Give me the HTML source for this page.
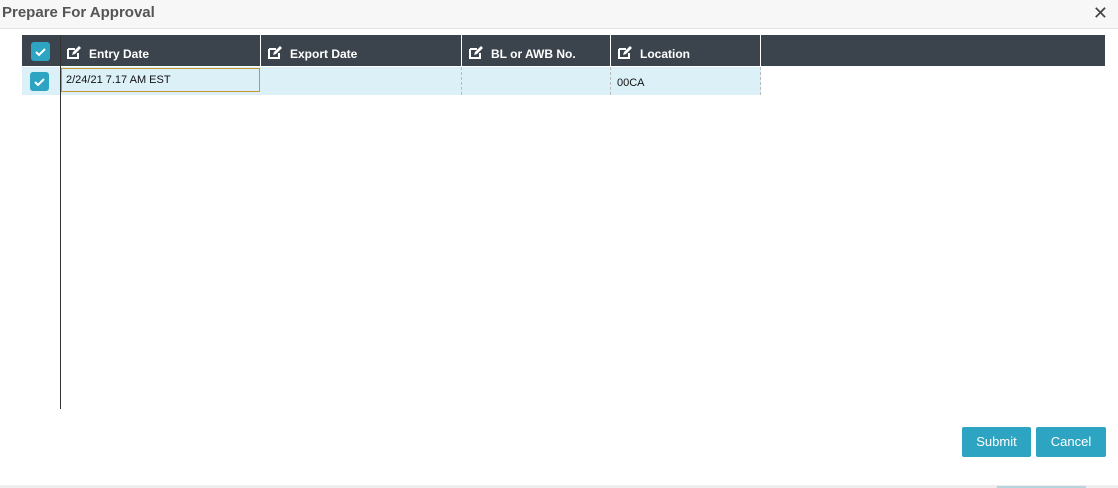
<!DOCTYPE html>
<html><head><style>
body{margin:0;width:1118px;height:488px;background:#fff;font-family:"Liberation Sans",sans-serif;position:relative;overflow:hidden}
.hdr{position:absolute;left:0;top:0;width:1118px;height:28px;background:#f7f7f7;border-bottom:1px solid #e3e3e3}
.title{position:absolute;left:2px;top:4px;font-size:15px;font-weight:bold;color:#555}
.x{position:absolute;right:10px;top:3px;font-size:18px;color:#444}
.th{position:absolute;top:35px;height:31px;background:#3b434c}
.cell{position:absolute;top:35px;height:31px;color:#fff;font-size:12px;font-weight:bold;line-height:38px;border-right:1px solid #fff;box-sizing:border-box}
.ic{display:inline-block;vertical-align:middle;margin:0 8px 0 7px;position:relative;top:-2px}
.cb{position:absolute;width:19px;height:19px;background:#2ea4c3;border-radius:3px}
.row{position:absolute;left:22px;top:67px;width:739px;height:28px;background:#dcf0f8}
.dash{position:absolute;top:67px;height:28px;border-left:1px dashed #bbb}
.btn{position:absolute;top:427px;height:30px;background:#2ea4c3;color:#fff;font-size:13px;text-align:center;line-height:30px;border-radius:2px}
</style></head><body>
<div class="hdr"><div class="title">Prepare For Approval</div><div class="x">✕</div></div>
<div class="th" style="left:22px;width:1083px"></div>
<div class="cb" style="left:31px;top:42px"><svg width="19" height="19"><path d="M5 10l3 3 6-6" stroke="#fff" stroke-width="2" fill="none"/></svg></div>
<div class="cell" style="left:60px;width:201px"><svg class="ic" width="14" height="13"><path d="M1 3h7M1 3v9h10V7" stroke="#fff" stroke-width="2" fill="none"/><path d="M5 9l1-3 6-6 2 2-6 6z" fill="#fff"/></svg>Entry Date</div>
<div class="cell" style="left:261px;width:201px"><svg class="ic" width="14" height="13"><path d="M1 3h7M1 3v9h10V7" stroke="#fff" stroke-width="2" fill="none"/><path d="M5 9l1-3 6-6 2 2-6 6z" fill="#fff"/></svg>Export Date</div>
<div class="cell" style="left:462px;width:149px"><svg class="ic" width="14" height="13"><path d="M1 3h7M1 3v9h10V7" stroke="#fff" stroke-width="2" fill="none"/><path d="M5 9l1-3 6-6 2 2-6 6z" fill="#fff"/></svg>BL or AWB No.</div>
<div class="cell" style="left:611px;width:150px"><svg class="ic" width="14" height="13"><path d="M1 3h7M1 3v9h10V7" stroke="#fff" stroke-width="2" fill="none"/><path d="M5 9l1-3 6-6 2 2-6 6z" fill="#fff"/></svg>Location</div>
<div class="row"></div>
<div class="cb" style="left:30px;top:72px"><svg width="19" height="19"><path d="M5 10l3 3 6-6" stroke="#fff" stroke-width="2" fill="none"/></svg></div>
<div style="position:absolute;left:61px;top:68px;height:24px;border:1px solid #c8962f;font-size:11px;line-height:23px;padding-left:4px;box-sizing:border-box;width:199px;color:#111">2/24/21 7.17 AM EST</div>
<div class="dash" style="left:461px"></div><div class="dash" style="left:610px"></div><div class="dash" style="left:760px"></div>
<div style="position:absolute;left:617px;top:77px;font-size:11px;color:#111">00CA</div>
<div style="position:absolute;left:60px;top:35px;width:1px;height:374px;background:#333"></div>
<div class="btn" style="left:962px;width:69px">Submit</div>
<div class="btn" style="left:1036px;width:70px">Cancel</div>
<div style="position:absolute;left:0;top:485px;width:1118px;height:3px;background:#eee"></div>
<div style="position:absolute;left:997px;top:486px;width:89px;height:2px;background:#b8d4dc"></div>
</body></html>
